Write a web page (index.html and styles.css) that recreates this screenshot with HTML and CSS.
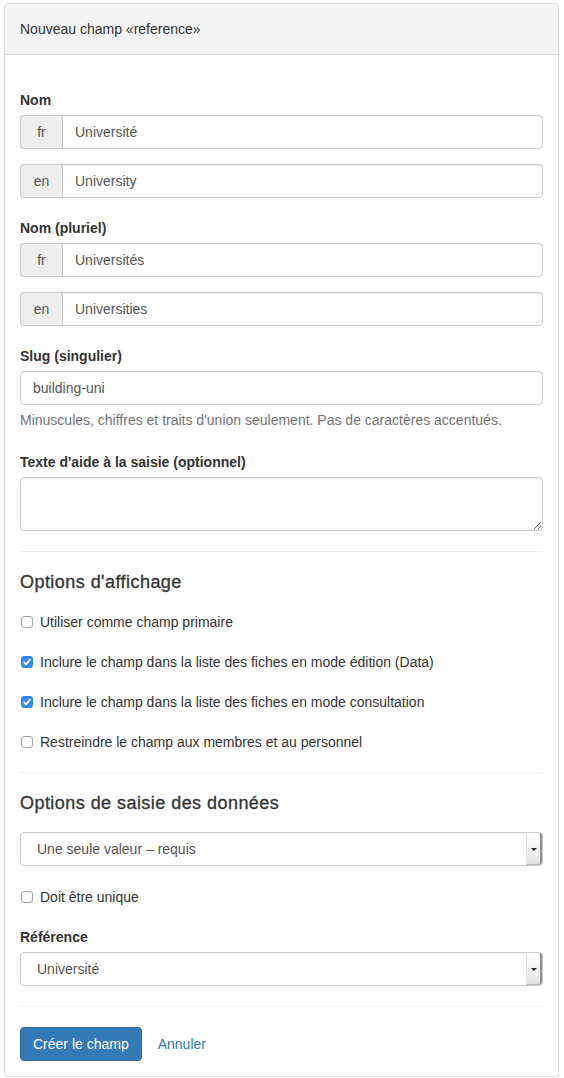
FILE: index.html
```html
<!DOCTYPE html>
<html lang="fr">
<head>
<meta charset="utf-8">
<title>Nouveau champ</title>
<link rel="stylesheet" href="styles.css">
</head>
<body>
<div class="page">
  <div class="panel">
    <div class="panel-heading">Nouveau champ «reference»</div>
    <div class="panel-body">
      <form class="form">
        <div class="form-group">
          <label class="control-label">Nom</label>
          <div class="input-group"><span class="addon">fr</span><input class="form-control" type="text" value="Université"></div>
          <div class="input-group"><span class="addon">en</span><input class="form-control" type="text" value="University"></div>
        </div>
        <div class="form-group">
          <label class="control-label">Nom (pluriel)</label>
          <div class="input-group"><span class="addon">fr</span><input class="form-control" type="text" value="Universités"></div>
          <div class="input-group"><span class="addon">en</span><input class="form-control" type="text" value="Universities"></div>
        </div>
        <div class="form-group with-help">
          <label class="control-label">Slug (singulier)</label>
          <input class="form-control" type="text" value="building-uni">
          <p class="help-block">Minuscules, chiffres et traits d'union seulement. Pas de caractères accentués.</p>
        </div>
        <div class="form-group">
          <label class="control-label">Texte d'aide à la saisie (optionnel)</label>
          <textarea class="form-control textarea" rows="2"></textarea>
        </div>

        <hr class="divider">
        <h4 class="section-title">Options d'affichage</h4>
        <div class="check-list">
          <label class="checkbox"><input type="checkbox" class="cb"><span>Utiliser comme champ primaire</span></label>
          <label class="checkbox"><input type="checkbox" class="cb" checked><span>Inclure le champ dans la liste des fiches en mode édition (Data)</span></label>
          <label class="checkbox"><input type="checkbox" class="cb" checked><span>Inclure le champ dans la liste des fiches en mode consultation</span></label>
          <label class="checkbox"><input type="checkbox" class="cb"><span>Restreindre le champ aux membres et au personnel</span></label>
        </div>

        <hr class="divider">
        <h4 class="section-title">Options de saisie des données</h4>
        <div class="select-group">
          <div class="select-wrap">
            <select class="form-control select">
              <option>Une seule valeur – requis</option>
            </select>
          </div>
        </div>
        <label class="checkbox single"><input type="checkbox" class="cb"><span>Doit être unique</span></label>
        <div class="form-group">
          <label class="control-label">Référence</label>
          <div class="select-wrap">
            <select class="form-control select">
              <option>Université</option>
            </select>
          </div>
        </div>

        <hr class="divider">
        <div class="actions">
          <button type="button" class="btn btn-primary">Créer le champ</button>
          <a class="btn-link" href="#">Annuler</a>
        </div>
      </form>
    </div>
  </div>
</div>
</body>
</html>
```

FILE: styles.css
```css
html, body {
  margin: 0;
  padding: 0;
  background: #fff;
}
body {
  font-family: "Liberation Sans", Arial, Helvetica, sans-serif;
  font-size: 14px;
  line-height: 20px;
  color: #333;
}
.page {
  padding: 3px 5px 0 4px;
}
.panel {
  background: #fff;
  border: 1px solid #ddd;
  border-radius: 4px;
  box-shadow: 0 1px 1px rgba(0, 0, 0, 0.05);
}
.panel-heading {
  padding: 15px;
  background: #f5f5f5;
  border-bottom: 1px solid #ddd;
  border-radius: 3px 3px 0 0;
  color: #333;
}
.panel-body {
  padding: 15px;
}
.form {
  display: flex;
  flex-direction: column;
  padding-top: 20px;
  margin: 0;
}
.form-group {
  display: flex;
  flex-direction: column;
  margin-bottom: 20px;
}
.form-group.with-help {
  margin-bottom: 22px;
}
.control-label {
  font-weight: 700;
  margin-bottom: 5px;
}
.input-group {
  display: flex;
  height: 34px;
}
.input-group + .input-group {
  margin-top: 15px;
}
.addon {
  flex: none;
  width: 42px;
  box-sizing: border-box;
  display: flex;
  align-items: center;
  justify-content: center;
  background: #eee;
  border: 1px solid #ccc;
  border-right: 0;
  border-radius: 4px 0 0 4px;
  color: #555;
}
.form-control {
  box-sizing: border-box;
  display: block;
  width: 100%;
  height: 34px;
  margin: 0;
  padding: 6px 12px;
  font-family: inherit;
  font-size: 14px;
  line-height: 20px;
  color: #555;
  background: #fff;
  border: 1px solid #ccc;
  border-radius: 4px;
  box-shadow: inset 0 1px 1px rgba(0, 0, 0, 0.075);
  outline: none;
}
.input-group .form-control {
  flex: 1;
  min-width: 0;
  width: auto;
  border-radius: 0 4px 4px 0;
}
.textarea {
  height: 54px;
  resize: vertical;
}
.help-block {
  margin: 5px 0 0;
  color: #737373;
}
.divider {
  height: 0;
  margin: 0 0 20px;
  border: 0;
  border-top: 1px solid #eee;
}
.section-title {
  margin: 0 0 10px;
  font-size: 18px;
  line-height: 20px;
  font-weight: 500;
  letter-spacing: 0.45px;
  -webkit-text-stroke: 0.3px #333;
  color: #333;
}
.check-list {
  display: flex;
  flex-direction: column;
  gap: 20px;
  margin-top: 10px;
  margin-bottom: 20px;
}
.checkbox {
  display: flex;
  align-items: center;
  height: 20px;
  font-weight: 400;
  cursor: pointer;
}
.checkbox.single {
  margin-bottom: 20px;
}
.cb {
  -webkit-appearance: none;
  appearance: none;
  flex: none;
  width: 12px;
  height: 12px;
  margin: 0 7px 0 1px;
  box-sizing: border-box;
  background: #fff;
  border: 1px solid #a3a3a3;
  border-radius: 3px;
  box-shadow: inset 0 1px 0 rgba(0, 0, 0, 0.04);
}
.cb:checked {
  background-color: #3a8cf5;
  border-color: #2f7ee6;
  background-image: url("data:image/svg+xml,%3Csvg xmlns='http://www.w3.org/2000/svg' viewBox='0 0 12 12'%3E%3Cpath d='M3 6.3l2 2.2 4-5' fill='none' stroke='%23fff' stroke-width='1.6' stroke-linecap='round' stroke-linejoin='round'/%3E%3C/svg%3E");
  background-size: 12px 12px;
  background-position: -1px -1px;
  background-repeat: no-repeat;
}
.select-group {
  margin-top: 9px;
  margin-bottom: 21px;
}
.select-wrap {
  position: relative;
}
.select {
  -webkit-appearance: none;
  appearance: none;
  padding-left: 16px;
  padding-right: 24px;
  color: #555;
}
.select-wrap::after {
  content: "";
  position: absolute;
  top: 1px;
  right: 1px;
  bottom: 1px;
  width: 13px;
  background: linear-gradient(#fefefe, #f1f1f1 60%, #e2e2e2);
  border-left: 1px solid #e4e4e4;
  border-right: 2px solid #8f8f8f;
  border-bottom: 1px solid #b9b9b9;
  border-radius: 0 3px 3px 0;
  pointer-events: none;
}
.select-wrap::before {
  content: "";
  position: absolute;
  top: 16px;
  right: 6px;
  width: 0;
  height: 0;
  border-left: 3px solid transparent;
  border-right: 3px solid transparent;
  border-top: 3px solid #222;
  z-index: 1;
  pointer-events: none;
}
.actions {
  display: flex;
  align-items: center;
  gap: 4px;
}
.btn {
  box-sizing: border-box;
  height: 34px;
  padding: 6px 12px;
  font-family: inherit;
  font-size: 14px;
  line-height: 20px;
  border-radius: 4px;
  cursor: pointer;
}
.btn-primary {
  color: #fff;
  background: #337ab7;
  border: 1px solid #2e6da4;
}
.btn-link {
  padding: 6px 12px;
  color: #337ab7;
  text-decoration: none;
}
```
